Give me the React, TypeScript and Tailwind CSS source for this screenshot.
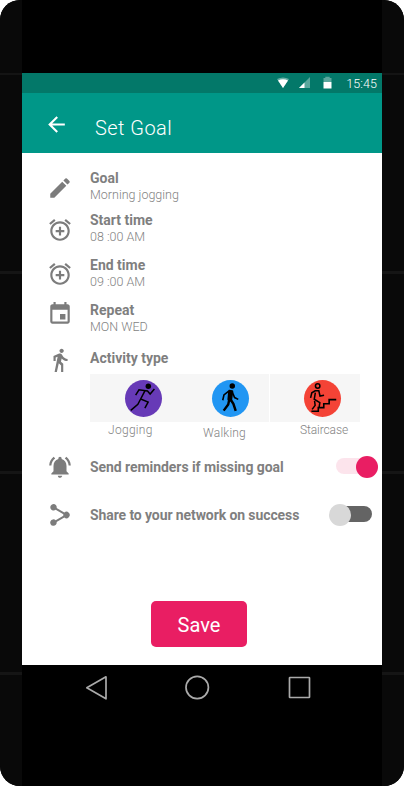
import React from "react";
import type { ReactNode } from "react";

const ICONS = {
  pencil:
    "M3 17.25V21h3.75L17.81 9.94l-3.75-3.75L3 17.25zM20.71 7.04c.39-.39.39-1.02 0-1.41l-2.34-2.34a.9959.9959 0 0 0-1.41 0l-1.83 1.83 3.75 3.75 1.83-1.83z",
  alarmAdd:
    "M7.88 3.39L6.6 1.86 2 5.71l1.29 1.53 4.59-3.85zM22 5.72l-4.6-3.86-1.29 1.53 4.6 3.86L22 5.72zM12 4c-4.97 0-9 4.03-9 9s4.02 9 9 9c4.97 0 9-4.03 9-9s-4.03-9-9-9zm0 16c-3.87 0-7-3.13-7-7s3.13-7 7-7 7 3.13 7 7-3.13 7-7 7zm1-11h-2v3H8v2h3v3h2v-3h3v-2h-3V9z",
  event:
    "M17 12h-5v5h5v-5zM16 1v2H8V1H6v2H5c-1.11 0-1.99.9-1.99 2L3 19c0 1.1.89 2 2 2h14c1.1 0 2-.9 2-2V5c0-1.1-.9-2-2-2h-1V1h-2zm3 18H5V8h14v11z",
  walk:
    "M13.5 5.5c1.1 0 2-.9 2-2s-.9-2-2-2-2 .9-2 2 .9 2 2 2zM9.8 8.9L7 23h2.1l1.8-8 2.1 2v6h2v-7.5l-2.1-2 .6-3C14.8 12 16.8 13 19 13v-2c-1.9 0-3.5-1-4.3-2.4l-1-1.6c-.4-.6-1-1-1.7-1-.3 0-.5.1-.8.1L6 8.3V13h2V9.6l1.8-.7",
  bell:
    "M7.58 4.08L6.15 2.65C3.75 4.48 2.17 7.3 2.03 10.5h2c.15-2.65 1.51-4.97 3.55-6.42zm12.39 6.42h2c-.15-3.2-1.73-6.02-4.12-7.85l-1.42 1.43c2.02 1.45 3.39 3.77 3.54 6.42zM18 11c0-3.07-1.64-5.64-4.5-6.32V4c0-.83-.67-1.5-1.5-1.5s-1.5.67-1.5 1.5v.68C7.63 5.36 6 7.92 6 11v5l-2 2v1h16v-1l-2-2v-5zm-6 11c.14 0 .27-.01.4-.04.65-.14 1.18-.58 1.44-1.18.1-.24.15-.5.15-.78h-4c.01 1.1.9 2 2.01 2z",
  share:
    "M6 1.9a3 3 0 0 1 2.9 3.7l7.1 4.1a3 3 0 1 1 0 4.6l-7.1 4.1A3 3 0 1 1 8 16.8l7.1-4.1a3 3 0 0 1 0-1.4L8 7.2A3 3 0 1 1 6 1.9z",
};

function Icon({ d, className }: { d: string; className?: string }) {
  return (
    <svg viewBox="0 0 24 24" className={`size-[26px] shrink-0 fill-[#7c7c7c] ${className ?? ""}`}>
      <path d={d} />
    </svg>
  );
}

function Row({ d, iconClass, rowClass, title, value }: { d: string; iconClass: string; rowClass: string; title: string; value?: string }) {
  return (
    <div className={`flex items-start gap-[17px] pl-[25px] ${rowClass}`}>
      <Icon d={d} className={iconClass} />
      <div>
        <div className="text-[14px] leading-[17px] font-bold text-[#7f7f7f]">{title}</div>
        {value && <div className="text-[12.5px] leading-4 font-light text-[#838383]">{value}</div>}
      </div>
    </div>
  );
}

function Disc({ color, children }: { color: string; children: ReactNode }) {
  return (
    <svg viewBox="0 0 36.5 36.5" className={`size-[37px] rounded-full fill-none stroke-black ${color}`}>
      {children}
    </svg>
  );
}

function Rail() {
  return (
    <div className="flex w-[22px] shrink-0 flex-col bg-[#090909] pt-[73px]">
      <div className="h-[2px] bg-[#141414]" />
      <div className="mt-[196px] h-[3px] bg-[#151515]" />
      <div className="mt-[197px] h-[3px] bg-[#151515]" />
      <div className="mt-[198px] h-[3px] bg-[#151515]" />
    </div>
  );
}

export default function App() {
  return (
    <div className="h-[787px] w-[404px] bg-white font-['Roboto',sans-serif]">
      <div className="flex h-[786px] w-[404px] overflow-hidden rounded-[20px] bg-black">
        <Rail />
        <div className="flex w-[360px] flex-col pt-[73px]">
          <div className="flex h-5 items-center justify-end bg-[#037869] pr-[5px] text-white">
            <svg viewBox="0 0 12 12" className="mr-[10px] size-3 fill-white">
              <path d="M0 2Q6-1 12 2L6 11z" opacity=".4" />
              <path d="M1 3.5Q6 .8 11 3.5L6 11z" />
            </svg>
            <svg viewBox="0 0 12 12" className="mr-[12px] size-3 fill-white">
              <path d="M0 11L11 0v11z" opacity=".35" />
              <path d="M0 11l5.5-5.5V11z" />
            </svg>
            <svg viewBox="0 0 9 13" className="mr-[14px] mb-px h-[13px] w-[9px] fill-white">
              <path d="M.5 2h1.8V.7h4.4V2h1.8v4h-8z" opacity=".35" />
              <path d="M.5 6h8v6.5h-8z" />
            </svg>
            <span className="mt-px text-[12.5px] leading-5 font-light tracking-[0.1px]">15:45</span>
          </div>
          <header className="flex h-[60px] items-start bg-[#009788] pl-[22px] text-white">
            <svg viewBox="0 0 24 24" className="mt-[19px] size-[25px] fill-white">
              <path d="M20 11H7.83l5.59-5.59L12 4l-8 8 8 8 1.41-1.41L7.83 13H20v-2z" />
            </svg>
            <h1 className="mt-[23px] ml-[26px] text-[20px] leading-6 font-light tracking-[0.45px]">Set Goal</h1>
          </header>

          <main className="flex h-[512px] flex-col bg-white pt-[17px]">
            <Row d={ICONS.pencil} iconClass="mt-[5px]" rowClass="h-[42px]" title="Goal" value="Morning jogging" />
            <Row d={ICONS.alarmAdd} iconClass="mt-[5px]" rowClass="h-[45px]" title="Start time" value="08 :00 AM" />
            <Row d={ICONS.alarmAdd} iconClass="mt-[4px]" rowClass="h-[45px]" title="End time" value="09 :00 AM" />
            <Row d={ICONS.event} iconClass="-mt-[1px]" rowClass="h-[48px]" title="Repeat" value="MON WED" />
            <Row d={ICONS.walk} iconClass="-mt-[3px]" rowClass="h-[24px]" title="Activity type" />

            <div className="ml-[68px] grid h-12 w-[270px] grid-cols-[179px_90px] gap-px">
              <div className="flex items-center gap-[50px] bg-[#f6f6f6] pl-[35px]">
                <Disc color="bg-[#673ab7]">
                  <circle cx="23" cy="6.2" r="2.7" className="fill-black stroke-none" />
                  <path d="M10.5 15l3.3-5.3 8.4 1.1 2.6 3L29 9M19.5 11l-4.2 8-2.6 5-7 6M15.5 18.8l7.3 3-3.2 6" strokeWidth="1.5" />
                </Disc>
                <Disc color="bg-[#2196f3]">
                  <circle cx="20" cy="6" r="2.7" className="fill-black stroke-none" />
                  <path d="M17 10.5l3 .7-1.2 9-2.6-1z" fill="black" strokeWidth="2" strokeLinejoin="round" />
                  <path d="M16.5 11l-4.7 3.7L10.6 20M20 12l2.3 5.3 3.6 1.8" strokeWidth="1.6" />
                  <path d="M17 19.5l-1 4.7-4.5 6M18.5 19.5l2.6 4 2.3 7" strokeWidth="2.4" />
                </Disc>
              </div>
              <div className="flex items-center bg-[#f6f6f6] pl-[34px]">
                <Disc color="bg-[#f44336]">
                  <circle cx="13.5" cy="6" r="2.2" strokeWidth="1.5" />
                  <path d="M6.5 17.6l1.2-5 3.3-2h3.6l1.2 5.2 4-.8M11.2 12.5l-1.1 6.5 5.5 3.3-.7 5M10.4 20.5L11 25l-3 4" strokeWidth="1.5" />
                  <path d="M7.3 30.8h6.8v-3.6h5.4v-3.8h5.3v-4h7" strokeWidth="1.6" />
                </Disc>
              </div>
            </div>
            <div className="flex h-[36px] text-[12px] leading-4 font-light text-[#838383]">
              <span className="ml-[86px] w-[95px] tracking-[0.3px]">Jogging</span>
              <span className="mt-[3px] w-[97px] tracking-[0.2px]">Walking</span>
              <span className="-tracking-[0.1px]">Staircase</span>
            </div>

            <div className="flex h-[48px] items-start">
              <Row d={ICONS.bell} iconClass="-mt-[5px]" rowClass="mt-px -tracking-[0.06px]" title="Send reminders if missing goal" />
              <div className="mr-[4px] ml-auto flex h-4 w-[42px] items-center justify-end rounded-full bg-linear-to-r from-[#fce4ec] from-88% to-transparent to-88%">
                <div className="mt-px size-[22px] shrink-0 rounded-full bg-[#e91e63]" />
              </div>
            </div>
            <div className="flex items-start">
              <Row d={ICONS.share} iconClass="-mt-[5px]" rowClass="mt-px -tracking-[0.1px]" title="Share to your network on success" />
              <div className="mr-[10px] ml-auto flex h-4 w-[38px] items-center rounded-full bg-[#646464]">
                <div className="-ml-[5px] mt-px size-[22px] shrink-0 rounded-full bg-[#d8d8d8]" />
              </div>
            </div>
            <button className="mt-auto mb-[18px] ml-[129px] h-[46px] w-24 shrink-0 rounded-[5px] bg-[#e91e63] pt-[2px] text-[20px] text-white">
              Save
            </button>
          </main>

          <nav className="flex items-center pt-[10px] pl-[62px]">
            <svg viewBox="0 0 26 26" className="size-[26px] fill-none stroke-[#aaa]">
              <path d="M22 1.8v22L2.8 12.8z" strokeWidth="1.7" strokeLinejoin="round" />
            </svg>
            <svg viewBox="0 0 26 26" className="ml-[74px] size-[26px] fill-none stroke-[#aaa]">
              <circle cx="13.2" cy="12.5" r="11.2" strokeWidth="1.7" />
            </svg>
            <svg viewBox="0 0 26 26" className="ml-[76px] size-[26px] fill-none stroke-[#aaa]">
              <rect x="3.5" y="2.5" width="20" height="20" rx=".5" strokeWidth="1.7" />
            </svg>
          </nav>
        </div>
        <Rail />
      </div>
    </div>
  );
}
